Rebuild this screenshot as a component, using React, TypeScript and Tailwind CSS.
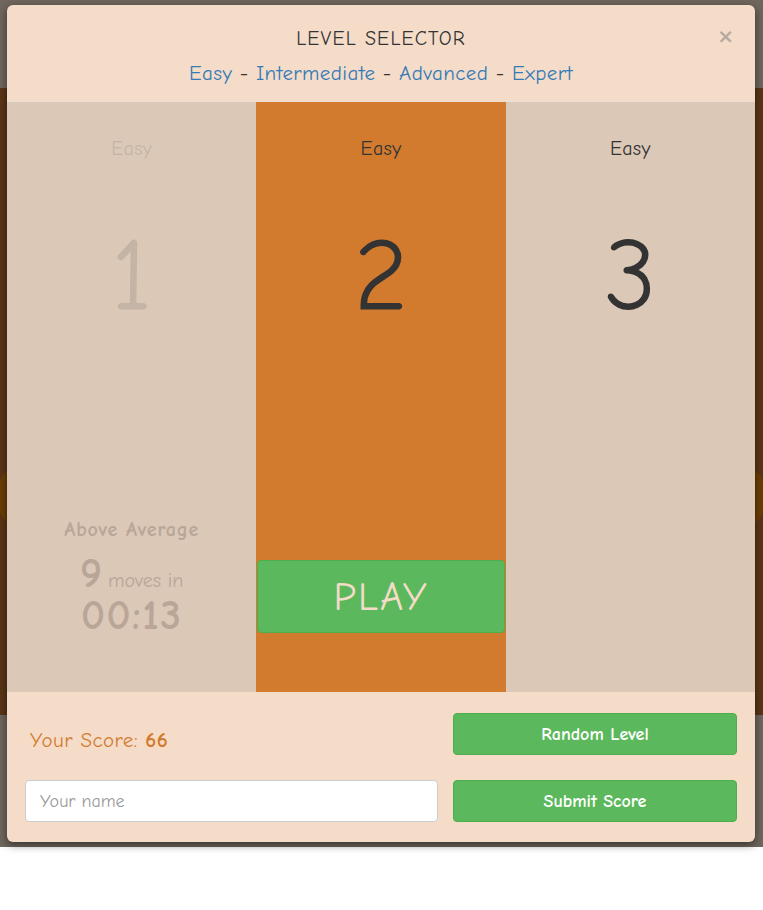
import React from "react";

const font = { fontFamily: '"Comic Sans MS", "Comic Neue", "Noto Sans", "DejaVu Sans", sans-serif' };

function LevelColumn({
  label,
  num,
  active,
  faded,
  children,
}: {
  label: string;
  num: string;
  active?: boolean;
  faded?: boolean;
  children?: React.ReactNode;
}) {
  return (
    <div
      className={
        "flex flex-col items-center " +
        (active ? "bg-[#d27b2e]" : "bg-[#dbc8b7]")
      }
    >
      <div className={"flex flex-col items-center " + (faded ? "opacity-[0.13]" : "")}>
        <div className="mt-[33px] text-[20px] leading-[28px] text-[#333333] tracking-[0.3px]">{label}</div>
        <div className="mt-[52px] text-[104px] leading-[120px] text-[#333333]">{num}</div>
      </div>
      {children}
    </div>
  );
}

export default function App() {
  return (
    <div className="relative w-full h-[910px] bg-white overflow-hidden" style={font}>
      {/* backdrop page */}
      <div className="flex flex-col h-[847px]">
        <div className="h-[88px] bg-[#6f665d]" />
        <div className="h-[627px] bg-[#5a3517] flex flex-col">
          <div className="h-[340px]" />
          <div className="h-[137px] bg-[#6b3e05] rounded-[40%]" />
        </div>
        <div className="flex-1 bg-[#6f665d]" />
      </div>

      {/* modal */}
      <div className="absolute left-[7px] top-[5px] w-[748px] rounded-[6px] bg-[#f5dcc9] shadow-[0_3px_9px_rgba(0,0,0,0.5)] overflow-hidden">
        <div className="relative h-[97px] border-b border-[#e9ddd4] flex flex-col items-center">
          <div className="mt-[20px] text-[20px] leading-[28px] text-[#333333] tracking-[1.2px]">
            LEVEL SELECTOR
          </div>
          <div className="mt-[6px] text-[21px] leading-[28px] text-[#333333] tracking-[0.4px]">
            <span className="text-[#337ab7]">Easy</span> -{" "}
            <span className="text-[#337ab7]">Intermediate</span> -{" "}
            <span className="text-[#337ab7]">Advanced</span> -{" "}
            <span className="text-[#337ab7]">Expert</span>
          </div>
          <div
            className="absolute right-[21px] top-[18px] text-[20px] leading-[26px] font-bold text-[#b5aaa0]"
            style={{ fontFamily: '"DejaVu Sans", sans-serif' }}
          >
            ×
          </div>
        </div>

        <div className="grid grid-cols-3 h-[590px]">
          <LevelColumn label="Easy" num="1" faded>
            <div className="mt-[181px] flex flex-col items-center text-[#b9a697]">
              <div className="text-[20px] leading-[28px] font-bold tracking-[0.8px]">Above Average</div>
              <div className="mt-[12px] flex items-baseline gap-[6px]">
                <span className="text-[42px] leading-[36px] font-bold">9</span>
                <span className="text-[20px] leading-[24px]">moves in</span>
              </div>
              <div className="mt-[2px] text-[42px] leading-[42px] font-bold tracking-[1.5px]">00:13</div>
            </div>
          </LevelColumn>
          <LevelColumn label="Easy" num="2" active>
            <div className="mt-[225px] w-full px-[1px]">
              <div className="h-[73px] w-full rounded-[4px] bg-[#5cb85c] border border-[#4cae4c] flex items-center justify-center text-[40px] text-[#f5dcc9] tracking-[2px]">
                PLAY
              </div>
            </div>
          </LevelColumn>
          <LevelColumn label="Easy" num="3" />
        </div>

        <div className="grid grid-cols-[1fr_284px] gap-x-[15px] gap-y-[25px] px-[18px] pt-[21px] pb-[20px]">
          <div className="h-[42px] flex items-center pl-[5px] pt-[12px] text-[21px] leading-[28px] text-[#d27b2e] tracking-[0.4px]">
            Your Score:&nbsp;<span className="font-bold">66</span>
          </div>
          <button className="h-[42px] rounded-[4px] bg-[#5cb85c] border border-[#4cae4c] text-white text-[18px] font-bold">
            Random Level
          </button>
          <input
            placeholder="Your name"
            className="h-[42px] rounded-[4px] bg-white border border-[#cccccc] px-[14px] text-[18px] text-[#555] placeholder:text-[#999999] outline-none"
            style={font}
          />
          <button className="h-[42px] rounded-[4px] bg-[#5cb85c] border border-[#4cae4c] text-white text-[18px] font-bold">
            Submit Score
          </button>
        </div>
      </div>
    </div>
  );
}
